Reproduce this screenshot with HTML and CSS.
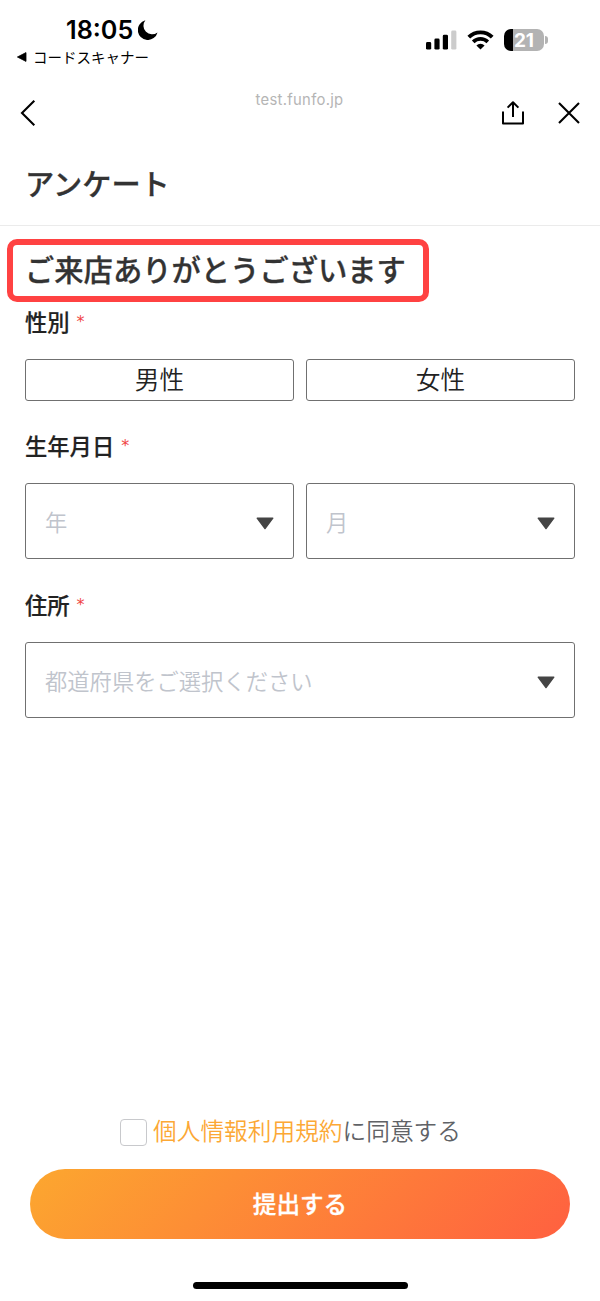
FILE: index.html
```
<!DOCTYPE html>
<html lang="ja">
<head>
  <meta charset="UTF-8" />
  <meta name="viewport" content="width=device-width, initial-scale=1.0" />
  <title>アンケート</title>
  <link rel="stylesheet" href="styles.css">
</head>
<body>

  <!-- Status bar -->
  <div class="status-bar">
    <div class="status-left">
      <div class="clock">
        <span>18:05</span>
        <svg width="20" height="20" viewBox="0 0 20 20"><path d="M7.4 0.3A10 10 0 1 0 19.5 12.4A8.6 8.6 0 0 1 7.4 0.3Z" fill="#000"/></svg>
      </div>
      <div class="back-app">
        <svg width="10" height="10" viewBox="0 0 10 10"><path d="M0.4 5L9 0.6V9.4Z" fill="#000" stroke="#000" stroke-width="0.8" stroke-linejoin="round"/></svg>
        <span>コードスキャナー</span>
      </div>
    </div>
    <div class="status-right">
      <svg class="signal" width="31" height="20" viewBox="0 0 31 20">
        <rect x="0" y="12" width="5.2" height="7.6" rx="1.4"/>
        <rect x="8.4" y="8.6" width="5.2" height="11" rx="1.4"/>
        <rect x="16.8" y="4.7" width="5.2" height="14.9" rx="1.4"/>
        <rect x="25.2" y="0.6" width="5.2" height="19" rx="1.4" fill="#ccc"/>
      </svg>
      <svg class="wifi" width="27" height="20" viewBox="0 0 27 20">
        <path d="M1.8 7.2A16.6 16.6 0 0 1 25.2 7.2" fill="none" stroke="#000" stroke-width="3.9"/>
        <path d="M6.2 11.9A10.4 10.4 0 0 1 20.8 11.9" fill="none" stroke="#000" stroke-width="3.7"/>
        <path d="M13.5 19.5L9.4 15.4A5.8 5.8 0 0 1 17.6 15.4Z"/>
      </svg>
      <div class="battery"><span>21</span></div>
      <div class="battery-tip"></div>
    </div>
  </div>

  <!-- Browser header -->
  <div class="nav-bar">
    <svg width="18" height="28" viewBox="0 0 18 28" fill="none" stroke="#000" stroke-width="2.1"><path d="M15.3 1.8L3 14L15.3 26.2"/></svg>
    <span class="url">test.funfo.jp</span>
    <div class="nav-actions">
      <svg width="24" height="26" viewBox="0 0 24 26" fill="none" stroke="#000" stroke-width="2" stroke-linejoin="round"><path d="M2 11.5V23.4H22V11.5M12 17V2.5M6.6 7.6L12 2.2L17.4 7.6"/></svg>
      <svg width="22" height="22" viewBox="0 0 22 22" fill="none" stroke="#000" stroke-width="2.1"><path d="M1 1L21 21M21 1L1 21"/></svg>
    </div>
  </div>

  <h1>アンケート</h1>

  <form class="survey">
    <h2>ご来店ありがとうございます</h2>

    <div class="field">
      <div class="label">性別<span class="required">*</span></div>
      <div class="row">
        <button type="button" class="option">男性</button>
        <button type="button" class="option">女性</button>
      </div>
    </div>

    <div class="field birthday">
      <div class="label">生年月日<span class="required">*</span></div>
      <div class="row">
        <div class="select"><span>年</span><svg class="arrow" width="18" height="13" viewBox="0 0 18 13"><path d="M1.2 1.2H16.8L9 11.6Z"/></svg></div>
        <div class="select"><span>月</span><svg class="arrow" width="18" height="13" viewBox="0 0 18 13"><path d="M1.2 1.2H16.8L9 11.6Z"/></svg></div>
      </div>
    </div>

    <div class="field address">
      <div class="label">住所<span class="required">*</span></div>
      <div class="row">
        <div class="select"><span>都道府県をご選択ください</span><svg class="arrow" width="18" height="13" viewBox="0 0 18 13"><path d="M1.2 1.2H16.8L9 11.6Z"/></svg></div>
      </div>
    </div>

    <div class="bottom">
      <label class="agree">
        <input type="checkbox" name="agree" />
        <span><a>個人情報利用規約</a>に同意する</span>
      </label>
      <button type="button" class="submit">提出する</button>
    </div>
  </form>

  <div class="home-indicator"></div>

</body>
</html>
```
FILE: styles.css
```
* {
  box-sizing: border-box;
}

body {
  margin: 0;
  height: 1301px;
  display: flex;
  flex-direction: column;
  background: #fff;
  color: #333;
  font-family: 'Noto Sans CJK JP', sans-serif;
}

svg {
  display: block;
  flex-shrink: 0;
}

.status-bar {
  height: 76px;
  display: flex;
  justify-content: space-between;
  padding: 16px 52px 0 17px;
  color: #000;
}

.clock {
  display: flex;
  align-items: center;
  gap: 5px;
  height: 28px;
  padding-left: 49px;
  font-family: Inter, sans-serif;
  font-size: 25.2px;
  font-weight: 600;
}

.back-app {
  display: flex;
  align-items: center;
  gap: 6px;
  height: 26px;
  font-size: 14.5px;
  line-height: 26px;
}

.status-right {
  display: flex;
  align-items: center;
  height: 48px;
}

.wifi {
  margin: 0 10px 0 10px;
}

.battery {
  width: 40px;
  height: 22px;
  border-radius: 7px;
  background: linear-gradient(to right, #000 9px, #b3b3b3 9px);
  color: #fff;
  font-family: Inter, sans-serif;
  font-size: 19px;
  font-weight: 700;
  line-height: 23px;
  text-align: center;
}

.battery-tip {
  width: 3px;
  height: 8px;
  margin-left: 1px;
  border-radius: 0 4px 4px 0;
  background: #b3b3b3;
}

.nav-bar {
  height: 74px;
  display: grid;
  grid-template-columns: 1fr auto 1fr;
  align-items: center;
  padding: 0 20px 0 19px;
}

.url {
  margin-bottom: 27px;
  color: #b5b5b5;
  font-family: Inter, sans-serif;
  font-size: 14.8px;
  letter-spacing: 0.3px;
}

.nav-actions {
  display: flex;
  align-items: center;
  justify-content: flex-end;
  gap: 33px;
}

h1 {
  height: 76px;
  margin: 0;
  padding-left: 25px;
  border-bottom: 1px solid #ebebeb;
  font-size: 29.2px;
  font-weight: 500;
  line-height: 65px;
  -webkit-text-stroke: 0.3px;
}

.survey {
  flex: 1;
  display: flex;
  flex-direction: column;
  padding: 13px 25px 0;
}

h2 {
  width: 422px;
  height: 63px;
  margin: 0 0 0 -18px;
  padding-left: 12px;
  border: 6px solid #ff4242;
  border-radius: 10px;
  font-size: 29.3px;
  font-weight: 500;
  line-height: 47px;
  white-space: nowrap;
  -webkit-text-stroke: 0.3px;
}

.label {
  display: flex;
  height: 57px;
  color: #222;
  font-size: 22.3px;
  font-weight: 500;
  line-height: 39px;
  -webkit-text-stroke: 0.2px;
}

.required {
  margin-left: 7px;
  color: #f04444;
  font-family: 'DejaVu Sans', sans-serif;
  font-size: 16px;
  font-weight: 400;
  -webkit-text-stroke: 0;
}

.birthday .label {
  height: 82px;
  padding-top: 25px;
}

.address .label {
  height: 83px;
  padding-top: 26px;
}

.row {
  display: flex;
  gap: 12px;
}

.option {
  flex: 1;
  height: 42px;
  padding: 0 0 3px;
  border: 1px solid #707070;
  border-radius: 3px;
  background: #fff;
  color: #222;
  font-family: inherit;
  font-size: 24.7px;
  font-weight: 350;
  line-height: 37px;
}

.select {
  flex: 1;
  display: flex;
  align-items: center;
  justify-content: space-between;
  height: 76px;
  padding: 0 19px;
  border: 1px solid #707070;
  border-radius: 3px;
  color: #c0c4cc;
  font-size: 22.3px;
  font-weight: 350;
}

.arrow {
  margin-top: 4px;
  fill: #444;
  stroke: #444;
  stroke-width: 1.4;
  stroke-linejoin: round;
}

.bottom {
  margin: auto 5px 0;
}

.agree {
  display: flex;
  align-items: center;
  height: 46px;
  margin: 0 0 14px 90px;
  color: #606266;
  font-size: 23.7px;
  font-weight: 350;
}

.agree span {
  height: 46px;
  line-height: 42px;
}

.agree input {
  appearance: none;
  width: 27px;
  height: 27px;
  margin: 0 6px 0 0;
  border: 1.5px solid #c8c9cc;
  border-radius: 4px;
  background: #fff;
}

.agree a {
  color: #fca835;
}

.submit {
  display: block;
  width: 100%;
  height: 70px;
  padding: 0 0 2px;
  border: none;
  border-radius: 35px;
  background: linear-gradient(135deg, #fca72f, #ff6040);
  color: #fff;
  font-family: inherit;
  font-size: 23.6px;
  font-weight: 500;
  line-height: 68px;
  -webkit-text-stroke: 0.3px;
}

.home-indicator {
  width: 215px;
  height: 7px;
  margin: 43px auto 12px;
  border-radius: 4px;
  background: #000;
}
```
